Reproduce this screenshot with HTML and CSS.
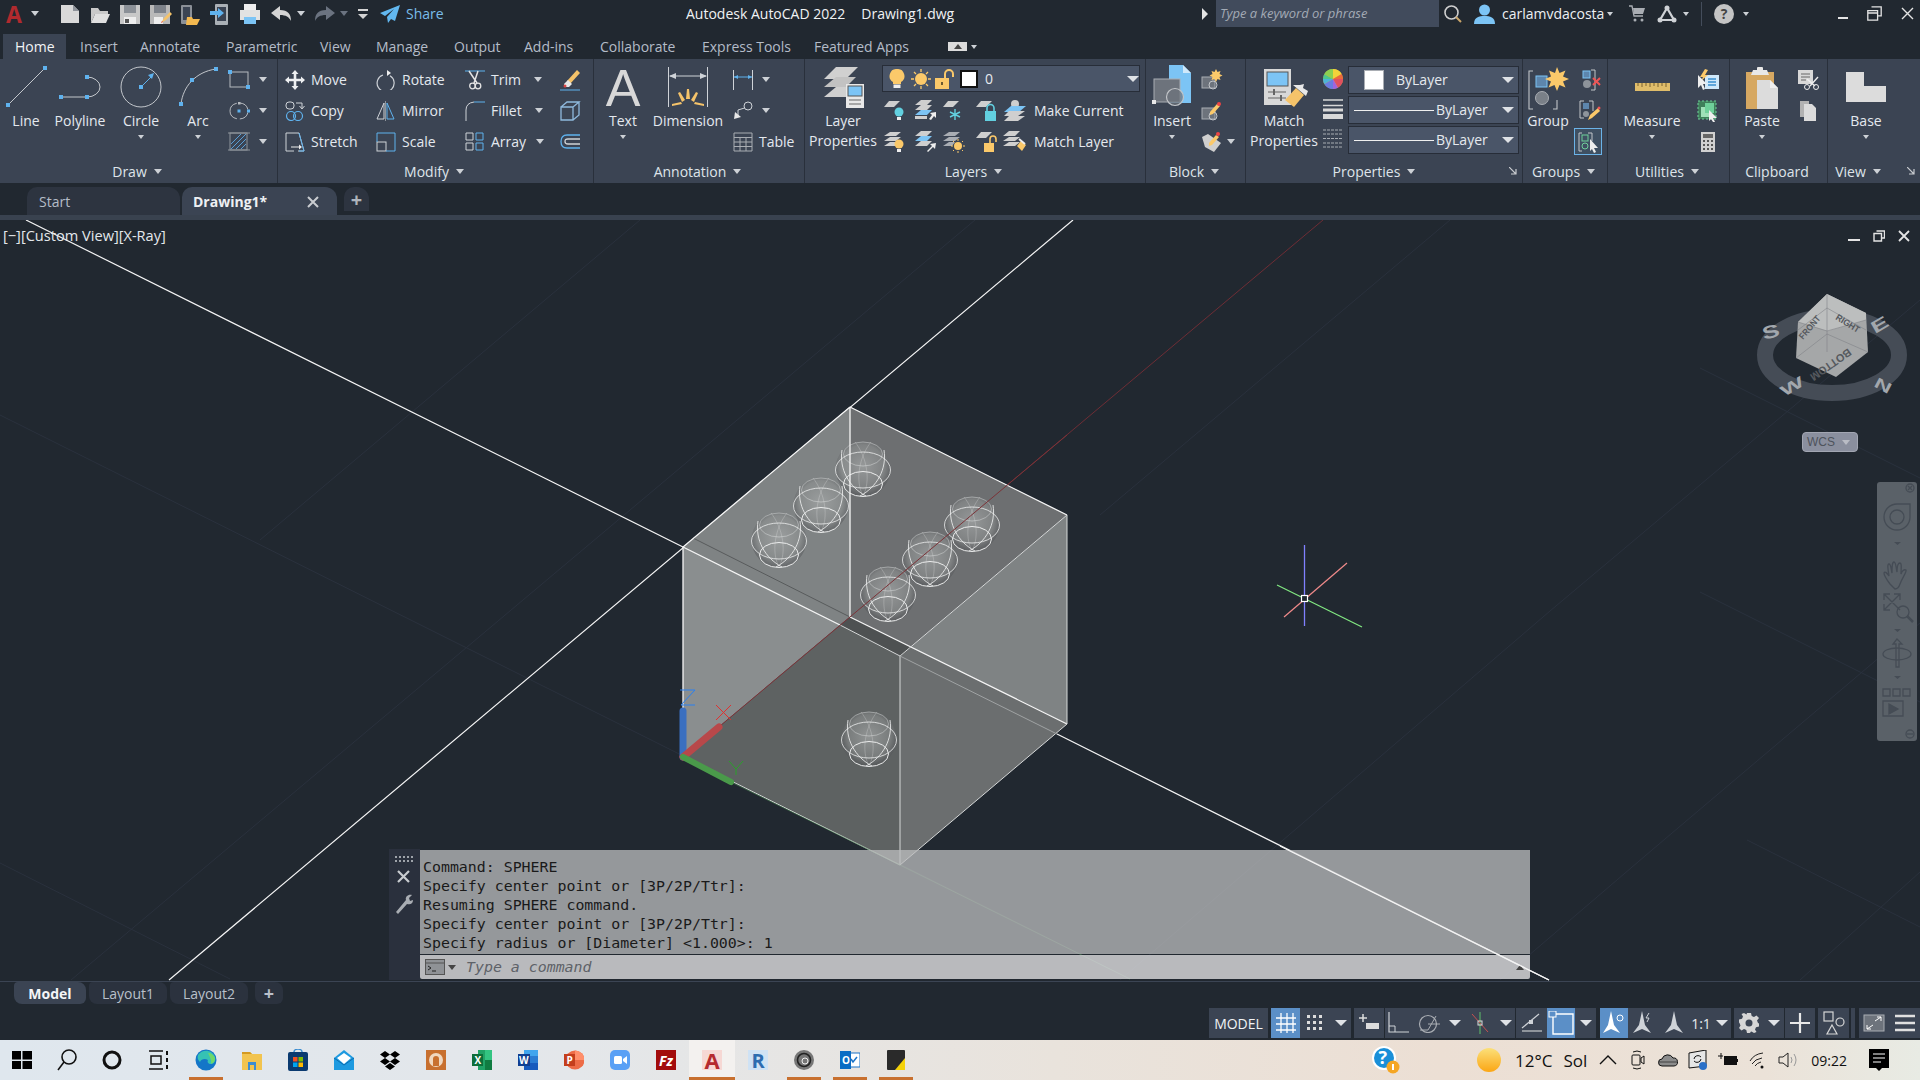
FILE: index.html
```html
<!DOCTYPE html>
<html lang="en">
<head>
<meta charset="utf-8">
<title>Autodesk AutoCAD 2022 - Drawing1.dwg</title>
<link rel="stylesheet" href="styles.css">
</head>
<body>
<div class="app">

<header class="titlebar">
  <div class="qat">
    <span class="logo">A</span><i class="caret ml9"></i>
    <svg class="ml16" width="30" height="24" viewBox="0 0 30 24"><path d="M6 3h12l6 6v12H6z" fill="#d9d9d9"/><path d="M18 3l6 6h-6z" fill="#8f949b"/></svg>
    <svg width="30" height="24" viewBox="0 0 30 24"><path d="M6 6h7l2 3h8v3H10l-4 9z" fill="#c9c9c9"/><path d="M10 12h15l-4 9H6z" fill="#e0e0e0"/></svg>
    <svg width="30" height="24" viewBox="0 0 30 24"><path d="M5 3h20v19H5z" fill="#c8c8c8"/><path d="M9 3h12v8H9z" fill="#8b9097"/><path d="M9 15h12v7H9z" fill="#eee"/><path d="M10 17h4v4h-4z" fill="#555"/></svg>
    <svg width="30" height="24" viewBox="0 0 30 24"><path d="M5 3h20v19H5z" fill="#b9b9b9"/><path d="M9 3h12v8H9z" fill="#7d828a"/><path d="M9 15h9v7H9z" fill="#eee"/><path d="M16 21l3-5 6-6 2 2-6 6z" fill="#f5c36a"/><path d="M16 21l2-1-1-1z" fill="#d44"/></svg>
    <svg width="30" height="24" viewBox="0 0 30 24"><rect x="6" y="3" width="11" height="19" rx="1" fill="#8b9097"/><rect x="8" y="5" width="7" height="13" fill="#3b4453"/><path d="M12 15h5l1 2h7l-3 6H11z" fill="#f3b84f"/></svg>
    <svg width="30" height="24" viewBox="0 0 30 24"><rect x="10" y="2" width="13" height="21" rx="1" fill="#aab0b6"/><rect x="12" y="5" width="9" height="14" fill="#3b4453"/><path d="M5 9h8V6l6 5-6 5v-3H5z" fill="#5fb2ee"/></svg>
    <svg width="30" height="24" viewBox="0 0 30 24"><path d="M9 2h12v6H9z" fill="#eee"/><path d="M5 8h20v10H5z" fill="#e2e2e2"/><path d="M9 15h12v7H9z" fill="#7cc4f5"/></svg>
    <svg width="32" height="24" viewBox="0 0 32 24"><path d="M6 11l9-7v4c8 0 11 4 11 11-2-4-5-6-11-6v5z" fill="#d4d4d4"/></svg><i class="caret"></i>
    <svg class="ml5" width="30" height="24" viewBox="0 0 30 24"><path d="M25 11l-9-7v4C8 8 5 12 5 19c2-4 5-6 11-6v5z" fill="#6b7380"/></svg><i class="caret dim"></i>
    <svg class="ml10" width="10" height="12" viewBox="0 0 10 12"><path d="M0 1h10v2H0z" fill="#d4d4d4"/><path d="M0 6h10L5 11z" fill="#d4d4d4"/></svg>
    <svg class="ml12" width="20" height="20" viewBox="0 0 20 20"><path d="M20 1L0 9l5 3 9-7-7 8 1 6 3-4 4 2z" fill="#62b8f0"/></svg>
    <span class="share">Share</span>
  </div>
  <div class="doctitle"><span>Autodesk AutoCAD 2022</span><span class="docname">Drawing1.dwg</span></div>
  <div class="infocenter">
    <svg width="8" height="12" viewBox="0 0 8 12"><path d="M1 0l6 6-6 6z" fill="#e4e4e4"/></svg>
    <div class="search ml7">Type a keyword or phrase</div>
    <svg class="ml5" width="18" height="18" viewBox="0 0 18 18"><circle cx="7.5" cy="7.5" r="6.5" fill="none" stroke="#cfcfcf" stroke-width="1.6"/><path d="M12 12l5 5" stroke="#c9a46a" stroke-width="2"/></svg>
    <svg class="ml12" width="21" height="20" viewBox="0 0 21 20"><circle cx="10.5" cy="6" r="5.5" fill="#7cc4f5"/><path d="M0 20c0-7 5-8 10.500-8s10.500 1 10.500 8z" fill="#7cc4f5"/></svg>
    <span class="user ml7">carlamvdacosta</span><i class="caret ml2 tiny"></i>
    <svg class="ml16" width="16" height="17" viewBox="0 0 16 17"><path d="M0 1h3l2 10h9" fill="none" stroke="#a9adb3" stroke-width="1.300"/><path d="M4 3h12l-2 6H5z" fill="#a9adb3"/><circle cx="6" cy="15" r="1.500" fill="#a9adb3"/><circle cx="13" cy="15" r="1.500" fill="#a9adb3"/></svg>
    <svg class="ml12" width="20" height="18" viewBox="0 0 20 18"><path d="M10 3L3 15h14z" fill="none" stroke="#cfd2d6" stroke-width="2.200"/><circle cx="10" cy="3" r="2.500" fill="#cfd2d6"/><circle cx="3" cy="15" r="2.500" fill="#cfd2d6"/><circle cx="17" cy="15" r="2.500" fill="#cfd2d6"/></svg>
    <i class="caret ml6 tiny"></i>
    <span class="vsep ml12"></span>
    <span class="help ml12">?</span><i class="caret ml9 tiny"></i>
    <div class="winbtns">
      <svg width="10" height="10" viewBox="0 0 10 10"><path d="M0 8h10v2H0z" fill="#e4e4e4"/></svg>
      <svg width="15" height="15" viewBox="0 0 15 15"><path d="M4.500.8h9.700v9h-3.600M.8 4.600h9.800v9.600H.8zM.8 7h9.800" fill="none" stroke="#e4e4e4" stroke-width="1.300"/></svg>
      <svg width="13" height="13" viewBox="0 0 13 13"><path d="M1 1l11 11M12 1L1 12" stroke="#e4e4e4" stroke-width="1.400"/></svg>
    </div>
  </div>
</header>

<nav class="ribbontabs">
  <span class="rt active">Home</span><span class="rt">Insert</span><span class="rt">Annotate</span><span class="rt">Parametric</span><span class="rt">View</span><span class="rt">Manage</span><span class="rt">Output</span><span class="rt">Add-ins</span><span class="rt">Collaborate</span><span class="rt">Express Tools</span><span class="rt">Featured Apps</span>
  <span class="minbtn"><i class="caret up"></i></span><i class="caret tiny ml4"></i>
</nav>

<section class="ribbon">
  <!-- DRAW -->
  <div class="panel p-draw">
    <div class="pbody">
      <div class="big"><svg width="42" height="46" viewBox="0 0 42 46"><path d="M3 40L40 3" stroke="#c3c7cc"/><rect x="1" y="38" width="4" height="4" fill="#5fb2ee"/><rect x="38" y="1" width="4" height="4" fill="#5fb2ee"/></svg><span class="lbl">Line</span></div>
      <div class="big"><svg width="46" height="46" viewBox="0 0 46 46"><path d="M4 32h26a13 10 0 0 0 0-20" fill="none" stroke="#c3c7cc"/><rect x="2" y="30" width="4" height="4" fill="#5fb2ee"/><rect x="28" y="30" width="4" height="4" fill="#5fb2ee"/><rect x="28" y="10" width="4" height="4" fill="#5fb2ee"/></svg><span class="lbl">Polyline</span></div>
      <div class="big"><svg width="46" height="46" viewBox="0 0 46 46"><circle cx="23" cy="22" r="20" fill="none" stroke="#c3c7cc"/><path d="M23 22l10-10" stroke="#5fb2ee"/><path d="M36 8l-6 2 4 4z" fill="#5fb2ee"/><rect x="21" y="20" width="4" height="4" fill="#5fb2ee"/></svg><span class="lbl">Circle</span><i class="caret sm"></i></div>
      <div class="big"><svg width="46" height="46" viewBox="0 0 46 46"><path d="M6 39C8 22 20 7 41 4" fill="none" stroke="#c3c7cc"/><rect x="4" y="37" width="4" height="4" fill="#5fb2ee"/><rect x="39" y="2" width="4" height="4" fill="#5fb2ee"/><rect x="15" y="13" width="4" height="4" fill="#5fb2ee"/></svg><span class="lbl">Arc</span><i class="caret sm"></i></div>
      <div class="rows drawsmall">
        <div class="row"><svg width="22" height="22" viewBox="0 0 22 22"><rect x="2" y="3" width="18" height="15" fill="none" stroke="#b6babf"/><rect x="0" y="1" width="4" height="4" fill="#5fb2ee"/><rect x="18" y="16" width="4" height="4" fill="#5fb2ee"/></svg><i class="caret ml9"></i></div>
        <div class="row"><svg width="22" height="22" viewBox="0 0 22 22"><path d="M2 11a9 8 0 0 1 18 0a9 8 0 0 1-18 0" fill="none" stroke="#b6babf" stroke-dasharray="11 3"/><rect x="9.500" y="9.500" width="3" height="3" fill="#5fb2ee"/><rect x="10" y="2" width="2.500" height="2.500" fill="#b6babf"/><rect x="19" y="9.500" width="3" height="3" fill="#5fb2ee"/></svg><i class="caret ml9"></i></div>
        <div class="row"><svg width="22" height="22" viewBox="0 0 22 22"><rect x="2" y="2" width="17" height="17" fill="none" stroke="#8e949b"/><path d="M3 13L13 3M3 18L18 3M8 18L18 8M13 18l5-5" stroke="#5a9dd4"/><path d="M0 2h22M0 19h22" stroke="#8e949b"/></svg><i class="caret ml9"></i></div>
      </div>
    </div>
    <div class="ptitle">Draw <i class="caret"></i></div>
  </div>
  <!-- MODIFY -->
  <div class="panel p-modify">
    <div class="pbody">
      <div class="rows col1">
        <div class="row t"><svg width="20" height="20" viewBox="0 0 20 20"><path d="M10 0l3.500 4H11.300v4.700H16V6.500l4 3.500-4 3.500v-2.300h-4.700V16h2.200L10 20l-3.500-4h2.200v-4.800H4v2.300L0 10l4-3.500v2.200h4.700V4H6.500z" fill="#eef0f2"/></svg><span>Move</span></div>
        <div class="row t"><svg width="20" height="20" viewBox="0 0 20 20"><rect x="1" y="1" width="8" height="7" rx="3" fill="none" stroke="#cfd3d8"/><circle cx="6" cy="15" r="4.500" fill="none" stroke="#5fb2ee" stroke-width="1.200"/><circle cx="13" cy="15" r="4.500" fill="none" stroke="#5fb2ee" stroke-width="1.200"/><path d="M11 2h6v5M14.500 5l2.500 3 2.500-3" fill="none" stroke="#cfd3d8"/></svg><span>Copy</span></div>
        <div class="row t"><svg width="20" height="20" viewBox="0 0 20 20"><path d="M9 19H1V1h13l5 18h-6" fill="none" stroke="#cfd3d8"/><path d="M6 15h8" stroke="#eee"/><path d="M14 12.500l3 2.500-3 2.500z" fill="#eee"/><path d="M14 1l5 18h-5" fill="none" stroke="#5fb2ee"/></svg><span>Stretch</span></div>
      </div>
      <div class="rows col2">
        <div class="row t"><svg width="20" height="20" viewBox="0 0 20 20"><path d="M6 4a8.500 8.500 0 1 0 7 .8" fill="none" stroke="#cfd3d8" stroke-width="1.200" transform="translate(1 1)"/><path d="M11 0l4 3-4 3z" fill="#eee"/></svg><span>Rotate</span></div>
        <div class="row t"><svg width="20" height="20" viewBox="0 0 20 20"><path d="M8 2L1 18h7z" fill="none" stroke="#cfd3d8"/><path d="M11 2l7 16h-7z" fill="none" stroke="#5fb2ee"/><path d="M9.500 0v20" stroke="#8e949b"/></svg><span>Mirror</span></div>
        <div class="row t"><svg width="20" height="20" viewBox="0 0 20 20"><rect x="1" y="10" width="9" height="9" fill="none" stroke="#cfd3d8"/><path d="M1 10V1h18v18h-9" fill="none" stroke="#5fb2ee"/></svg><span>Scale</span></div>
      </div>
      <div class="rows col3">
        <div class="row t"><svg width="20" height="20" viewBox="0 0 20 20"><path d="M0 1h20" stroke="#5fb2ee"/><path d="M4 1l8 12M13 1L9 13" stroke="#e4e4e4" stroke-width="1.500"/><circle cx="7.500" cy="16" r="2.800" fill="none" stroke="#e4e4e4" stroke-width="1.300"/><circle cx="13" cy="16" r="2.800" fill="none" stroke="#e4e4e4" stroke-width="1.300"/></svg><span>Trim</span><i class="caret ml13"></i></div>
        <div class="row t"><svg width="20" height="20" viewBox="0 0 20 20"><path d="M1 20V9q0-7 8-8" fill="none" stroke="#cfd3d8"/><path d="M9 1h11" stroke="#5fb2ee"/></svg><span>Fillet</span><i class="caret ml13"></i></div>
        <div class="row t"><svg width="20" height="20" viewBox="0 0 20 20"><path d="M1 1h7v7H1zM1 11h7v7H1z" fill="none" stroke="#cfd3d8"/><path d="M11 1h7v7h-7zM11 11h7v7h-7z" fill="none" stroke="#5fb2ee"/></svg><span>Array</span><i class="caret ml10"></i></div>
      </div>
      <div class="rows col4">
        <div class="row"><svg width="22" height="22" viewBox="0 0 22 22"><path d="M8 12l10-11 3 3-10 11z" fill="#f5c36a"/><path d="M5 15l4-4 4 4-3 3H6z" fill="#e8e8e8"/><circle cx="6" cy="17" r="1.500" fill="#d44"/><path d="M1 21h20" stroke="#5fb2ee"/></svg></div>
        <div class="row"><svg width="22" height="22" viewBox="0 0 22 22"><path d="M2 7h12v13H2zM2 7l6-5h12l-6 5M14 20l6-5V2" fill="none" stroke="#8fb9dd" stroke-width="1.300"/></svg></div>
        <div class="row"><svg width="22" height="22" viewBox="0 0 22 22"><path d="M21 4H8q-6 0-6 6.500T8 17h13" fill="none" stroke="#5fb2ee" stroke-width="1.300"/><path d="M21 8H9q-3 0-3 2.500T9 13h12" fill="none" stroke="#cfd3d8" stroke-width="1.300"/></svg></div>
      </div>
    </div>
    <div class="ptitle">Modify <i class="caret"></i></div>
  </div>
  <!-- ANNOTATION -->
  <div class="panel p-annot">
    <div class="pbody">
      <div class="big"><span class="bigA">A</span><span class="lbl">Text</span><i class="caret sm"></i></div>
      <div class="big"><svg width="42" height="46" viewBox="0 0 42 46"><path d="M1.500 2v40M40.500 2v40" stroke="#cfd3d8"/><path d="M3 11h36" stroke="#cfd3d8"/><path d="M2 11l7-3v6zM40 11l-7-3v6z" fill="#cfd3d8"/><g fill="#f5c36a"><path d="M20 24h2l1 10h-4z"/><path d="M11 28l2-1 5 8-3 2z"/><path d="M31 28l-2-1-5 8 3 2z"/><path d="M5 39l9-2 1 2-10 2z"/><path d="M37 39l-9-2-1 2 10 2z"/></g></svg><span class="lbl">Dimension</span></div>
      <div class="rows annsmall">
        <div class="row"><svg width="20" height="20" viewBox="0 0 20 20"><path d="M.5 0v20M19.500 0v20" stroke="#cfd3d8"/><path d="M1 7h18" stroke="#5fb2ee"/><path d="M1 7l4-2v4zM19 7l-4-2v4z" fill="#5fb2ee"/></svg><i class="caret ml9"></i></div>
        <div class="row"><svg width="20" height="20" viewBox="0 0 20 20"><circle cx="15" cy="5" r="4" fill="none" stroke="#cfd3d8"/><path d="M11.500 7L5 9v6" fill="none" stroke="#cfd3d8"/><path d="M1 18l1-7 6 5z" fill="#e8e8e8"/></svg><i class="caret ml9"></i></div>
        <div class="row t"><svg width="20" height="20" viewBox="0 0 20 20"><path d="M1 1h18v18H1zM1 5.500h18M1 10h18M1 14.500h18M7 5.500V19M13 5.500V19" fill="none" stroke="#a9adb3"/></svg><span>Table</span></div>
      </div>
    </div>
    <div class="ptitle">Annotation <i class="caret"></i></div>
  </div>
  <!-- LAYERS -->
  <div class="panel p-layers">
    <div class="pbody">
      <div class="big"><svg width="42" height="46" viewBox="0 0 42 46"><g fill="#d0d0d0"><path d="M14 2h22L24 14H2z"/><path d="M14 12h20L24 22H2z" fill="#c2c2c2"/><path d="M14 22h20L24 32H2z" fill="#d0d0d0"/></g><rect x="24" y="19" width="18" height="24" fill="#e8e8e8"/><rect x="26" y="21" width="14" height="10" fill="#7cc4f5" stroke="#555"/><path d="M27 35h12M27 39h12" stroke="#666"/></svg><span class="lbl">Layer</span><span class="lbl">Properties</span></div>
      <div class="layerscol">
        <div class="dd layerdd">
          <svg width="16" height="20" viewBox="0 0 16 20"><path d="M8 0a7 7 0 0 1 4 13v2H4v-2A7 7 0 0 1 8 0z" fill="#fbc96a"/><path d="M4.500 15.500h7V19h-7z" fill="#eee"/></svg>
          <svg class="ml6" width="20" height="20" viewBox="0 0 20 20"><circle cx="10" cy="10" r="6" fill="#fbc96a"/><path d="M10 0v3M10 17v3M0 10h3M17 10h3M3 3l2 2M15 15l2 2M3 17l2-2M15 5l2-2" stroke="#fbc96a" stroke-width="1.300"/></svg>
          <svg class="ml4" width="20" height="20" viewBox="0 0 20 20"><rect x="0" y="9" width="14" height="11" fill="#fbc96a"/><path d="M10 9V5a4 4 0 0 1 8 0v3" fill="none" stroke="#fbc96a" stroke-width="2"/><rect x="6" y="13" width="2" height="3" fill="#6d5a30"/></svg>
          <span class="swatch ml5"></span><span class="ddtext ml7">0</span><i class="caret lg right"></i>
        </div>
        <div class="row layerrow t">
          <svg width="22" height="22" viewBox="0 0 22 22"><path d="M5 1h11l-6 6H0z" fill="#cfcfcf"/><circle cx="15" cy="12" r="4.500" fill="#62d0e0"/><path d="M13 17h4v3h-4z" fill="#eee"/></svg>
          <svg width="22" height="22" viewBox="0 0 22 22"><path d="M6 0h11l-5 5H0z" fill="#cfcfcf"/><path d="M6 5h11l-5 5H0z" fill="#cfcfcf"/><path d="M6 10h11l-5 5H0z" fill="#7cc4f5"/><path d="M0 16h12v3H0z" fill="#cfcfcf"/><path d="M21 12l-6 1 2 2-3 4 2 1 3-4 2 2z" fill="#eee"/></svg>
          <svg width="22" height="22" viewBox="0 0 22 22"><path d="M5 1h11l-6 6H0z" fill="#cfcfcf"/><path d="M12 9v11M7 12l10 5M17 12L7 17" stroke="#62d0e0" stroke-width="1.400"/></svg>
          <svg width="22" height="22" viewBox="0 0 22 22"><path d="M5 1h11l-6 6H0z" fill="#cfcfcf"/><rect x="9" y="11" width="11" height="10" fill="#62d0e0"/><path d="M11 11V8a3.500 3.500 0 0 1 7 0v3" fill="none" stroke="#62d0e0" stroke-width="1.600"/></svg>
          <svg width="24" height="22" viewBox="0 0 24 22"><circle cx="12" cy="4" r="4" fill="#cfcfcf"/><path d="M8 6h15l-7 6H1z" fill="#7cc4f5"/><path d="M6 11h16l-7 5H1z" fill="#cfcfcf"/><path d="M6 16h16l-7 5H1z" fill="#cfcfcf"/></svg>
          <span>Make Current</span>
        </div>
        <div class="row layerrow t">
          <svg width="22" height="22" viewBox="0 0 22 22"><path d="M6 1h11l-5 4H0z M6 6h11l-5 4H0z M6 11h9l-3 4H0z" fill="#cfcfcf"/><circle cx="15" cy="13" r="4.500" fill="#fbc96a"/><path d="M13 18h4v3h-4z" fill="#eee"/></svg>
          <svg width="22" height="22" viewBox="0 0 22 22"><path d="M6 0h11l-5 5H0z" fill="#cfcfcf"/><path d="M6 5h11l-5 5H0z" fill="#7cc4f5"/><path d="M6 10h11l-5 5H0z" fill="#cfcfcf"/><path d="M21 12l-6 1 2 2-5 5 1 1 5-5 2 2z" fill="#eee"/></svg>
          <svg width="22" height="22" viewBox="0 0 22 22"><path d="M6 1h11l-5 4H0z M6 6h11l-5 4H0z M6 11h6l-3 4H0z" fill="#a9adb3"/><circle cx="15" cy="15" r="4" fill="#fbc96a"/><path d="M15 8v2M15 20v2M8 15h2M20 15h2M10 10l1 1M19 19l1 1M10 20l1-1M19 11l1-1" stroke="#fbc96a"/></svg>
          <svg width="22" height="22" viewBox="0 0 22 22"><path d="M5 1h11l-6 6H0z" fill="#cfcfcf"/><rect x="8" y="12" width="10" height="9" fill="#fbc96a"/><path d="M14 12V8a3 3 0 0 1 6 0v3" fill="none" stroke="#fbc96a" stroke-width="1.600"/></svg>
          <svg width="24" height="22" viewBox="0 0 24 22"><path d="M6 0h11l-5 5H0z M6 6h11l-5 4H0z M6 11h11l-5 4H0z" fill="#cfcfcf"/><path d="M14 15l4-5 5 4-4 6z" fill="#fbc96a"/><path d="M16 8l6 5" stroke="#eee" stroke-width="2"/></svg>
          <span>Match Layer</span>
        </div>
      </div>
    </div>
    <div class="ptitle">Layers <i class="caret"></i></div>
  </div>
  <!-- BLOCK -->
  <div class="panel p-block">
    <div class="pbody">
      <div class="big"><svg width="42" height="46" viewBox="0 0 42 46"><path d="M18 0h14l8 8v30H18z" fill="#7cc4f5"/><path d="M32 0l8 8h-8z" fill="#cfe8fa"/><rect x="3" y="14" width="26" height="23" fill="#6d737c" stroke="#a9adb3"/><circle cx="24" cy="32" r="8.500" fill="#6d737c" fill-opacity=".7" stroke="#c2c5c9" stroke-width="1.200"/><rect x="1" y="35" width="4" height="4" fill="#e8e8e8"/></svg><span class="lbl">Insert</span><i class="caret sm"></i></div>
      <div class="rows blocksmall">
        <div class="row"><svg width="22" height="22" viewBox="0 0 22 22"><rect x="1" y="8" width="13" height="11" fill="#6d737c" stroke="#a9adb3"/><circle cx="12" cy="16" r="4" fill="none" stroke="#c2c5c9"/><path d="M15 0l1.500 3 3-1-1 3 3 1.500-3 1.500 1 3-3-1L15 13l-1.500-3-3 1 1-3L8.500 6.500l3-1.500-1-3 3 1z" fill="#fbc96a"/></svg></div>
        <div class="row"><svg width="22" height="22" viewBox="0 0 22 22"><rect x="1" y="8" width="13" height="11" fill="#6d737c" stroke="#a9adb3"/><circle cx="12" cy="16" r="4" fill="none" stroke="#c2c5c9"/><path d="M9 12l7-8 3 2-7 8-3 1z" fill="#fbc96a"/><circle cx="18" cy="4" r="2" fill="#e44"/></svg></div>
        <div class="row"><svg width="22" height="22" viewBox="0 0 22 22"><path d="M1 6l6-3 13 9-7 9-9-5z" fill="#cfcfcf"/><path d="M8 12l7-8 3 2-7 8-3 1z" fill="#fbc96a"/><circle cx="17" cy="3" r="2" fill="#e44"/></svg><i class="caret ml4"></i></div>
      </div>
    </div>
    <div class="ptitle">Block <i class="caret"></i></div>
  </div>
  <!-- PROPERTIES -->
  <div class="panel p-props">
    <div class="pbody">
      <div class="big"><svg width="50" height="46" viewBox="0 0 50 46"><rect x="5" y="4" width="27" height="36" fill="#d8d8d8"/><rect x="8" y="7" width="21" height="14" fill="#7cc4f5" stroke="#555"/><path d="M9 27h18M9 33h18" stroke="#666"/><rect x="14" y="24" width="2" height="6" fill="#666"/><rect x="21" y="30" width="2" height="6" fill="#666"/><path d="M26 35l11-12 8 7-10 12z" fill="#f5c36a"/><path d="M34 20l13 11 2-5-5-3 1-4-4 1z" fill="#e8e8e8"/></svg><span class="lbl">Match</span><span class="lbl">Properties</span></div>
      <div class="rows propicons">
        <div class="row"><svg width="20" height="20" viewBox="0 0 20 20"><circle cx="10" cy="10" r="10" fill="#e8a33a"/><path d="M10 10V0a10 10 0 0 1 8.700 5z" fill="#f2d23a"/><path d="M10 10l8.700-5A10 10 0 0 1 20 10z" fill="#ea6a3c"/><path d="M10 10h10a10 10 0 0 1-5 8.700z" fill="#e0505f"/><path d="M10 10l5 8.700A10 10 0 0 1 10 20z" fill="#a064dc"/><path d="M10 10v10a10 10 0 0 1-8.700-5z" fill="#6a7ce0"/><path d="M10 10l-8.700 5A10 10 0 0 1 0 10z" fill="#4cb4d8"/><path d="M10 10H0a10 10 0 0 1 1.300-5z" fill="#4cc88c"/><path d="M10 10L1.300 5A10 10 0 0 1 10 0z" fill="#8cd050"/></svg></div>
        <div class="row"><svg width="20" height="20" viewBox="0 0 20 20"><path d="M0 1h20M0 6.500h20" stroke="#d8d8d8" stroke-width="1.500"/><path d="M0 9.500h20v3H0z" fill="#d8d8d8"/><path d="M0 15h20v5H0z" fill="#d8d8d8"/></svg></div>
        <div class="row"><svg width="20" height="20" viewBox="0 0 20 20"><path d="M0 1h20M0 5h20M0 9.500h20M0 14h20M0 18h20" stroke="#a9adb3" stroke-dasharray="3 1"/></svg></div>
      </div>
      <div class="propdds">
        <div class="dd"><span class="swatch2"></span><span class="ddtext ml12">ByLayer</span><i class="caret lg right"></i></div>
        <div class="dd"><span class="ddline"></span><span class="ddtext">ByLayer</span><i class="caret lg right"></i></div>
        <div class="dd"><span class="ddline"></span><span class="ddtext">ByLayer</span><i class="caret lg right"></i></div>
      </div>
    </div>
    <div class="ptitle propstitle">Properties <i class="caret"></i><svg class="launch" width="8" height="8" viewBox="0 0 8 8"><path d="M0 0l7 7M7 2v5H2" fill="none" stroke="#c9ccd0" stroke-width="1.200"/></svg></div>
  </div>
  <!-- GROUPS -->
  <div class="panel p-groups">
    <div class="pbody">
      <div class="big"><svg width="42" height="46" viewBox="0 0 42 46"><path d="M6 6H2v38h4M26 44h4v-9" fill="none" stroke="#c2c5c9" stroke-width="1.100"/><rect x="9" y="11" width="11" height="11" fill="#5d86ad" stroke="#7cc4f5"/><circle cx="15" cy="33" r="6.500" fill="#7a8088" stroke="#a9adb3"/><path d="M30 2l2.500 6 6-2.500-2.500 6 6 2.500-6 2.500 2.500 6-6-2.500L30 26l-2.500-6-6 2.500 2.500-6-6-2.500 6-2.500L22 5.500l6 2.500z" fill="#fbc96a"/></svg><span class="lbl">Group</span></div>
      <div class="rows groupsmall">
        <div class="row"><svg width="22" height="22" viewBox="0 0 22 22"><path d="M12 1h4v20h-4" fill="none" stroke="#c2c5c9"/><rect x="4" y="2" width="7" height="7" fill="#5d86ad" stroke="#7cc4f5"/><circle cx="8" cy="15" r="4" fill="#8e949b"/><path d="M14 9l7 7M21 9l-7 7" stroke="#e55" stroke-width="2"/></svg></div>
        <div class="row"><svg width="22" height="22" viewBox="0 0 22 22"><path d="M5 1H1v17h4M10 1h4v10" fill="none" stroke="#c2c5c9"/><rect x="4" y="3" width="6" height="6" fill="#5d86ad"/><circle cx="7" cy="14" r="3" fill="#8e949b"/><path d="M9 20l2-5 8-7 2 3-8 7z" fill="#fbc96a"/><circle cx="20" cy="8" r="1.500" fill="#e55"/></svg></div>
        <div class="row selbox"><svg width="24" height="22" viewBox="0 0 24 22"><path d="M6 2H3v18h3M12 2h4v8" fill="none" stroke="#c2c5c9"/><rect x="6" y="4" width="6" height="6" fill="none" stroke="#6fd09a"/><circle cx="9" cy="15" r="3" fill="none" stroke="#6fd09a"/><path d="M14 8l8 9-4 0 2 4-2 1-2-4-2 2z" fill="#eee"/></svg></div>
      </div>
    </div>
    <div class="ptitle">Groups <i class="caret"></i></div>
  </div>
  <!-- UTILITIES -->
  <div class="panel p-util">
    <div class="pbody">
      <div class="big"><svg width="36" height="46" viewBox="0 0 36 46"><rect x="1" y="18" width="35" height="8" fill="#e0bd6a"/><path d="M4 18v3M8 18v4M12 18v3M16 18v4M20 18v3M24 18v4M28 18v3M32 18v4" stroke="#7a6230"/></svg><span class="lbl">Measure</span><i class="caret sm"></i></div>
      <div class="rows utilsmall">
        <div class="row"><svg width="22" height="22" viewBox="0 0 22 22"><rect x="8" y="6" width="14" height="14" fill="#cfe8fa"/><path d="M11 10h8M11 13h8M11 16h8" stroke="#3a8fcf" stroke-width="1.300"/><path d="M8 0L3 8h3L4 12l7-6H8l3-5z" fill="#fbc96a"/><path d="M1 6l9 9-4 0 2 5-2 1-2-5-3 3z" fill="#eee"/></svg></div>
        <div class="row"><svg width="22" height="22" viewBox="0 0 22 22"><rect x="1" y="1" width="18" height="18" fill="#3f7f5a" stroke="#6fd09a" stroke-dasharray="2 2"/><rect x="4" y="7" width="10" height="10" fill="#9fe0b8"/><rect x="8" y="3" width="9" height="10" fill="#6fd09a"/><path d="M12 10l8 8-4 0 2 4-2 0-2-3-2 2z" fill="#eee"/></svg></div>
        <div class="row"><svg width="22" height="22" viewBox="0 0 22 22"><rect x="4" y="1" width="14" height="20" fill="#d0d0d0"/><rect x="6" y="3" width="10" height="4" fill="#666"/><path d="M6 9h2v2H6zM10 9h2v2h-2zM14 9h2v2h-2zM6 13h2v2H6zM10 13h2v2h-2zM14 13h2v2h-2zM6 17h2v2H6zM10 17h2v2h-2zM14 17h2v2h-2z" fill="#555"/></svg></div>
      </div>
    </div>
    <div class="ptitle">Utilities <i class="caret"></i></div>
  </div>
  <!-- CLIPBOARD -->
  <div class="panel p-clip">
    <div class="pbody">
      <div class="big"><svg width="36" height="46" viewBox="0 0 36 46"><rect x="2" y="7" width="28" height="37" fill="#d6a862"/><path d="M9 5h14l2 5H7z" fill="#e8e8e8"/><rect x="13" y="2" width="6" height="4" rx="1" fill="#e8e8e8"/><path d="M13 15h13l8 8v21H13z" fill="#dcdcdc"/><path d="M26 15l8 8h-8z" fill="#f0f0f0"/></svg><span class="lbl">Paste</span><i class="caret sm"></i></div>
      <div class="rows clipsmall">
        <div class="row"><svg width="22" height="22" viewBox="0 0 22 22"><path d="M1 1h15v14H1z" fill="#d8d8d8"/><path d="M4 5h9M4 8h9M4 11h5" stroke="#666"/><path d="M10 10l8 7M21 8l-8 9" stroke="#eee" stroke-width="1.400"/><circle cx="10" cy="18" r="2.500" fill="none" stroke="#eee"/><circle cx="19" cy="18" r="2.500" fill="none" stroke="#eee"/></svg></div>
        <div class="row"><svg width="22" height="22" viewBox="0 0 22 22"><path d="M3 1h9v16H3z" fill="#b2b2b2"/><path d="M7 4h8l4 4v13H7z" fill="#dcdcdc"/></svg></div>
      </div>
    </div>
    <div class="ptitle">Clipboard</div>
  </div>
  <!-- VIEW -->
  <div class="panel p-view">
    <div class="pbody">
      <div class="big"><svg width="40" height="46" viewBox="0 0 40 46"><path d="M0 7h18v14h22v16H0z" fill="#dcdcdc"/></svg><span class="lbl">Base</span><i class="caret sm"></i></div>
    </div>
    <div class="ptitle viewtitle">View <i class="caret"></i><svg class="launch" width="8" height="8" viewBox="0 0 8 8"><path d="M0 0l7 7M7 2v5H2" fill="none" stroke="#c9ccd0" stroke-width="1.200"/></svg></div>
  </div>
</section>

<div class="filetabs">
  <span class="ftab start">Start</span>
  <span class="ftab current"><b>Drawing1*</b><svg width="12" height="12" viewBox="0 0 12 12"><path d="M1 1l10 10M11 1L1 11" stroke="#c9ccd0" stroke-width="2"/></svg></span>
  <span class="ftab plus">+</span>
</div>
<div class="strip"></div>

<main class="viewport">
  <svg class="canvas" width="1920" height="761" viewBox="0 220 1920 761">
    <defs>
      <radialGradient id="blob" cx=".5" cy=".45" r=".52">
        <stop offset="0" stop-color="#a8abab" stop-opacity=".7"/>
        <stop offset=".75" stop-color="#8f9292" stop-opacity=".55"/>
        <stop offset="1" stop-color="#55575a" stop-opacity=".5"/>
      </radialGradient>
      <g id="sph">
        <circle cx="0" cy="0" r="27.500" fill="url(#blob)"/>
        <g fill="none" stroke="#eceded" stroke-width="1">
          <ellipse cx="0" cy="1" rx="27.500" ry="18" stroke-opacity=".8"/>
          <ellipse cx="0" cy="15" rx="19.500" ry="12.500"/>
          <ellipse cx="0" cy="-15" rx="19.500" ry="12" stroke-opacity=".4"/>
          <path d="M-21-19C-24 0-14 18 3 27M21-19C24 0 14 18-3 27" stroke-opacity=".85"/>
          <path d="M-8-27C4-12 8 12 0 27M8-27C-4-12-8 12 0 27" stroke-opacity=".25"/>
        </g>
      </g>
    </defs>
    <g class="grid">
      <path d="M0 415L1130 979M0 863L230 979M975 220L71 980M1700 368L1920 478M1700 592L1920 702M1920 300L1550 611L1120 980M1920 623L1652 850L1500 980M1450 220L1100 515M1747 840L1920 927M1920 872L1800 980M640 220L260 540"/>
    </g>
    <path class="red" d="M683 757L1323 220"/>
    <path class="axis" d="M26 220L683 547M1073 220L169 980M1057 734L1549 980"/>
    <polygon points="850,407 683,547 840,625 850,617" fill="#7f8384"/>
    <polygon points="850,407 1067,515 911,647 850,617" fill="#6d6f71"/>
    <polygon points="1067,515 1067,724 911,647" fill="#7f8384"/>
    <polygon points="683,547 840,625 683,757" fill="#8a8e8f"/>
    <polygon points="683,757 840,625 900,656 900,865" fill="#5e6262"/>
    <polygon points="900,656 911,647 1067,724 900,865" fill="#6b6e6f"/>
    <polygon points="850,617 911,647 900,656 840,625" fill="#4e5152"/>
    <path d="M693 538L850 617" stroke="#585b5c" stroke-width="1"/>
    <use href="#sph" x="863" y="469"/><use href="#sph" x="821" y="505"/><use href="#sph" x="779" y="540"/>
    <use href="#sph" x="972" y="524"/><use href="#sph" x="930" y="559"/><use href="#sph" x="888" y="594"/>
    <use href="#sph" x="869" y="739"/>
    <path class="edge" d="M850 407L683 547V757M850 407L1067 515M850 407V617M850 617L1067 724M683 547L840 625"/>
    <path class="edge thin" d="M1067 515V724L900 865L683 757M900 656L1067 515M840 625L900 656V865"/>
    <path class="greyline" d="M900 656L1057 734"/>
    <path class="redin" d="M683 757L1067 435"/>
    <path class="green" d="M733 783L900 865L1130 979"/>
    <g class="ucs">
      <path d="M683 757V711" stroke="#3a6fc0" stroke-width="7" stroke-linecap="round"/>
      <path d="M683 757L719 727" stroke="#b8484a" stroke-width="7" stroke-linecap="round"/>
      <path d="M683 757L731 782" stroke="#4a9a4a" stroke-width="6" stroke-linecap="round"/>
      <path d="M680 690H695L681 705H695" fill="none" stroke="#2a80f0"/>
      <path d="M716 705L731 720M731 705L716 720" stroke="#e03030"/>
      <path d="M729 761L736 769L743 761M736 769V775" fill="none" stroke="#2aa02a"/>
    </g>
    <g class="cursor">
      <path d="M1304.500 545V626" stroke="#8080ff" stroke-width="1.300"/>
      <path d="M1277 585L1362 627" stroke="#82e882" stroke-width="1.200"/>
      <path d="M1284 617L1347 563" stroke="#f08a8a" stroke-width="1.200"/>
      <rect x="1301.500" y="595.500" width="6" height="6" fill="#212830" stroke="#fff" stroke-width="1.200"/>
    </g>
  </svg>

  <span class="vplabel">[−][Custom View][X-Ray]</span>
  <div class="vpbtns">
    <svg width="12" height="12" viewBox="0 0 12 12"><path d="M0 9h12v2H0z" fill="#e4e4e4"/></svg>
    <svg width="12" height="12" viewBox="0 0 12 12"><path d="M3.500 1h8v7h-3M1 3.500h7.500v7.500H1z" fill="none" stroke="#e4e4e4" stroke-width="1.400"/></svg>
    <svg width="12" height="12" viewBox="0 0 12 12"><path d="M1 1l10 10M11 1L1 11" stroke="#e4e4e4" stroke-width="1.800"/></svg>
  </div>

  <svg class="viewcube" width="170" height="130" viewBox="1750 280 170 130">
    <ellipse cx="1832" cy="355" rx="67" ry="38" fill="none" stroke="#454c56" stroke-width="16"/>
    <polygon points="1827,294 1866,313 1868,352 1836,377 1796,358 1798,322" fill="#a5a7a8"/>
    <polygon points="1827,294 1866,313 1866,320 1828,331 1798,322" fill="#bcbebe"/>
    <path d="M1827 294V352M1798 322L1827 331L1866 320M1796 358L1827 334L1868 352M1798 330L1827 308L1866 330" fill="none" stroke="#7d8084" stroke-width=".7" opacity=".8"/>
    <text class="cubetxt" transform="translate(1803,340) rotate(-50) scale(.9,1)">FRONT</text>
    <text class="cubetxt" transform="translate(1835,319) rotate(32) scale(.95,1)">RIGHT</text>
    <text class="cubetxt big" transform="translate(1848,348) rotate(145)">BOTTOM</text>
    <text class="compass" transform="translate(1764,340) rotate(-15) scale(1.300,.9)">S</text>
    <text class="compass" transform="translate(1875,334) rotate(-30) scale(1.300,.85)">E</text>
    <text class="compass" transform="translate(1784,397) rotate(-30) scale(1.300,.75)">W</text>
    <text class="compass" transform="translate(1873,386) rotate(28) scale(1.200,.75)">N</text>
  </svg>
  <div class="wcs">WCS<i class="caret hollow"></i></div>

  <div class="navbar">
    <svg width="40" height="259" viewBox="0 0 40 259">
      <g fill="none" stroke="#454c55" stroke-width="1.300">
        <circle cx="33" cy="6" r="4"/><path d="M31 4l4 4M35 4l-4 4"/>
        <path d="M20 22a13 13 0 1 0 13 13V22z"/><circle cx="20" cy="35" r="7"/>
        <path d="M13 102c-3-4-6-9-6-11 1-2 3 0 5 3-1-7-2-12 0-12 2 0 2 5 3 9 0-6 0-11 2-11s2 6 3 10c0-5 1-9 3-9 2 0 1 6 1 11 1-3 3-5 5-4 1 2-4 8-6 14-1 3-2 5-5 5z"/>
        <path d="M7 112l16 16M23 112L7 128M7 118v-6h6M23 118v-6h-6M7 122v6h6"/><circle cx="26" cy="130" r="6"/><path d="M30 134l6 6" stroke-width="2.500"/>
        <path d="M20 157l-4 5h3v23h3v-23h3z"/><ellipse cx="20" cy="172" rx="14" ry="6"/>
        <path d="M6 207h7v7H6zM16 207h7v7h-7zM26 207h7v7h-7zM6 219h20v15H6z"/><path d="M12 222l9 5-9 5z" fill="#454c55"/>
        <circle cx="33" cy="252" r="4"/><path d="M30 252h6"/>
      </g>
      <path d="M17 60h7l-3.500 3zM17 147h7l-3.500 3zM17 194h7l-3.500 3z" fill="#454c55"/>
    </svg>
  </div>

  <section class="cmd">
    <div class="cmdhandle">
      <svg width="18" height="6" viewBox="0 0 18 6"><path d="M0 0h2v2H0zM4 0h2v2H4zM8 0h2v2H8zM12 0h2v2h-2zM16 0h2v2h-2zM0 4h2v2H0zM4 4h2v2H4zM8 4h2v2H8zM12 4h2v2h-2zM16 4h2v2h-2z" fill="#9ea3aa"/></svg>
      <svg width="13" height="13" viewBox="0 0 13 13"><path d="M1 1l11 11M12 1L1 12" stroke="#c9ccd0" stroke-width="2.200"/></svg>
      <svg width="18" height="20" viewBox="0 0 18 20"><path d="M1 18L11 6c-1-3 2-6 6-5l-3 3 1 3 3-1c0 4-3 5-6 4L3 20z" fill="#a9adb3"/></svg>
    </div>
    <div class="cmdmain">
      <pre class="cmdhist">Command: SPHERE
Specify center point or [3P/2P/Ttr]:
Resuming SPHERE command.
Specify center point or [3P/2P/Ttr]:
Specify radius or [Diameter] &lt;1.000&gt;: 1</pre>
      <div class="cmdinput">
        <svg width="20" height="16" viewBox="0 0 20 16"><rect x=".5" y=".5" width="19" height="15" fill="#8f9296" stroke="#555"/><path d="M1 4h18" stroke="#555"/><path d="M3 7l3 2-3 2M7 12h4" fill="none" stroke="#222"/></svg>
        <i class="caret cmdcaret"></i><span class="ph">Type a command</span><i class="caret up cmdup"></i>
      </div>
    </div>
  </section>
  <svg class="canvas top" width="1920" height="761" viewBox="0 220 1920 761"><path class="axis" d="M1280 846L1549 980"/></svg>
</main>

<div class="layoutbar">
  <span class="ltab on">Model</span><span class="ltab">Layout1</span><span class="ltab">Layout2</span><span class="ltab add">+</span>
</div>

<footer class="status">
  <span class="seg model">MODEL</span>
  <div class="seg ml3">
    <span class="sb w29 on"><svg width="22" height="22" viewBox="0 0 22 22"><path d="M6 1v20M12 1v20M18 1v20M1 6h20M1 12h20M1 18h20" stroke="#fff" stroke-width="1.300"/></svg></span>
    <span class="sb w30"><svg width="16" height="16" viewBox="0 0 16 16"><path d="M0 0h3v3H0zM6 0h3v3H6zM12 0h3v3h-3zM0 6h3v3H0zM6 6h3v3H6zM12 6h3v3h-3zM0 12h3v3H0zM6 12h3v3H6zM12 12h3v3h-3z" fill="#dcdcdc"/></svg></span>
    <span class="sb w21"><i class="caret lg"></i></span>
  </div>
  <div class="seg ml3"><span class="sb w30"><svg width="22" height="20" viewBox="0 0 22 20"><path d="M5 1v8M1 5h8" stroke="#dcdcdc" stroke-width="1.500"/><rect x="8" y="10" width="13" height="6" fill="#dcdcdc"/></svg></span></div>
  <div class="seg ml1">
    <span class="sb w26"><svg width="22" height="24" viewBox="0 0 22 24"><path d="M2 1v20h20" fill="none" stroke="#cfd3d8" stroke-width="1.200"/><path d="M2 15h6v6" fill="none" stroke="#cfd3d8"/></svg></span>
    <span class="sb w36"><svg width="22" height="20" viewBox="0 0 22 20"><circle cx="10" cy="11" r="8.500" fill="none" stroke="#a9adb3" stroke-width="1.200"/><path d="M2 17h8L18 3" fill="none" stroke="#a9adb3"/><path d="M10 11h12" stroke="#a9adb3"/></svg></span>
    <span class="sb w16"><i class="caret lg"></i></span>
    <span class="sb w33"><svg width="18" height="22" viewBox="0 0 18 22"><path d="M9 0v22" stroke="#5fbf6a"/><path d="M1 2l16 18" stroke="#c85050"/><rect x="7" y="9" width="4" height="4" fill="none" stroke="#ddd"/></svg></span>
    <span class="sb w19"><i class="caret lg"></i></span>
  </div>
  <div class="seg ml1">
    <span class="sb w31"><svg width="22" height="20" viewBox="0 0 22 20"><path d="M1 15L18 1" stroke="#cfd3d8" stroke-width="1.200"/><path d="M1 18h20" stroke="#8e949b" stroke-width="2"/><rect x="8" y="7" width="4" height="4" fill="#cfd3d8"/></svg></span>
    <span class="sb w28 on"><svg width="26" height="24" viewBox="0 0 26 24"><path d="M5 3h20v20H5z" fill="none" stroke="#fff" stroke-width="1.400"/><rect x="1" y="0" width="7" height="6" fill="#5b8fc7" stroke="#fff"/></svg></span>
    <span class="sb w21"><i class="caret lg"></i></span>
  </div>
  <div class="seg ml4">
    <span class="sb w28 on"><svg width="24" height="24" viewBox="0 0 24 24"><path d="M9 0l3 14 6 8-9-4-8 4 5-8z" fill="#fff"/><circle cx="18" cy="7" r="3" fill="none" stroke="#fff"/></svg></span>
    <span class="sb w30"><svg width="22" height="24" viewBox="0 0 22 24"><path d="M10 0l3 14 6 8-9-4-9 4 6-8z" fill="#cfd3d8"/><path d="M17 2l-3 5h3l-2 4" fill="none" stroke="#cfd3d8"/></svg></span>
    <span class="sb w31"><svg width="20" height="24" viewBox="0 0 20 24"><path d="M10 0l3 14 6 8-9-4-9 4 6-8z" fill="#cfd3d8"/></svg></span>
    <span class="sb w24 scale">1:1</span>
    <span class="sb w18"><i class="caret lg"></i></span>
  </div>
  <div class="seg ml3">
    <span class="sb w30"><svg width="20" height="20" viewBox="0 0 20 20"><path d="M8 0h4l.7 3 2.300 1 2.500-1.500 2.500 2.500L18 7.500l1 2.500 1 .5v3l-3 .7-1 2.300 1.500 2.500-2.500 1-2.500-1.500-1.800.7L12 20H8l-.7-3-2.300-1-2.500 1.500L0 15l1.500-2.500L.5 10 0 9.500v-3l3-.7 1-2.300L2.500 1 5 0l2.500 1.500z" fill="#d6d6d6"/><circle cx="10" cy="10" r="3.500" fill="#3b4453"/></svg></span>
    <span class="sb w20"><i class="caret lg"></i></span>
  </div>
  <div class="seg ml1"><span class="sb w30"><svg width="20" height="20" viewBox="0 0 20 20"><path d="M10 0v20M0 10h20" stroke="#e8e8e8" stroke-width="2.200"/></svg></span></div>
  <div class="seg ml3"><span class="sb w31"><svg width="22" height="24" viewBox="0 0 22 24"><rect x="1" y="1" width="9" height="9" fill="none" stroke="#d6d6d6" stroke-width="1.200"/><circle cx="17" cy="11" r="4" fill="none" stroke="#d6d6d6" stroke-width="1.200"/><path d="M9 14l5 9H4z" fill="none" stroke="#d6d6d6" stroke-width="1.200"/></svg></span></div>
  <div class="seg w4 ml2"></div>
  <div class="seg ml4 last">
    <span class="sb w30"><svg width="22" height="18" viewBox="0 0 22 18"><rect x="1" y="1" width="20" height="16" fill="#6d737c" stroke="#a9adb3"/><path d="M12 7l6-4M18 3h-4M18 3v4" stroke="#fff" fill="none"/><path d="M10 11l-6 4M4 15h4M4 15v-4" stroke="#fff" fill="none"/></svg></span>
    <span class="sb w31"><svg width="20" height="18" viewBox="0 0 20 18"><path d="M0 2h20M0 9h20M0 16h20" stroke="#e0e0e0" stroke-width="2.400"/></svg></span>
  </div>
</footer>

<div class="taskbar">
  <span class="tk w44"><svg width="20" height="20" viewBox="0 0 20 20"><path d="M0 1h9v8.500H0zM10.500 1H20v8.500h-9.500zM0 11h9v8H0zM10.500 11H20v8h-9.500z" fill="#000"/></svg></span>
  <span class="tk w46"><svg width="20" height="22" viewBox="0 0 20 22"><circle cx="12" cy="8" r="7" fill="none" stroke="#111" stroke-width="1.600"/><path d="M7 13l-6 8" stroke="#111" stroke-width="1.600"/></svg></span>
  <span class="tk w44"><svg width="20" height="20" viewBox="0 0 20 20"><ellipse cx="10" cy="10" rx="8" ry="8" fill="none" stroke="#111" stroke-width="3"/></svg></span>
  <span class="tk w49"><svg width="22" height="20" viewBox="0 0 22 20"><path d="M1 1h14M1 19h14M3 6h10v8H3z" fill="none" stroke="#111" stroke-width="1.500"/><path d="M19 1v4M19 8v4M19 15v4" stroke="#111" stroke-width="2"/></svg></span>
  <span class="tk open"><svg width="22" height="22" viewBox="0 0 22 22"><circle cx="11" cy="11" r="10.500" fill="#1476c8"/><path d="M3 6c4-6 14-6 17 2 1 4-1 7-4 7-3 0-4-2-3-4-3-2-7-1-8 2-2-2-3-4-2-7z" fill="#36c2b4"/><path d="M13 4c3 0 6 2 7 5 0 3-1 5-4 6 1-3-1-7-3-11z" fill="#6fd868"/></svg></span>
  <span class="tk"><svg width="20" height="20" viewBox="0 0 20 20"><path d="M0 2h8l2 2h10v16H0z" fill="#f2c44f"/><path d="M0 2h8l2 2H0z" fill="#d49a22"/><path d="M6 12h8v8h-2v-5H8v5H6z" fill="#3c8dd0"/></svg></span>
  <span class="tk"><svg width="20" height="22" viewBox="0 0 20 22"><rect y="3" width="20" height="19" rx="2" fill="#0a3a70"/><path d="M6 3a4 3 0 0 1 8 0" fill="none" stroke="#3c8dd0" stroke-width="1.500"/><path d="M5 8h4.500v4.500H5z" fill="#f25022"/><path d="M10.500 8H15v4.500h-4.500z" fill="#7fba00"/><path d="M5 13.500h4.500V18H5z" fill="#00a4ef"/><path d="M10.500 13.500H15V18h-4.500z" fill="#ffb900"/></svg></span>
  <span class="tk"><svg width="20" height="20" viewBox="0 0 20 20"><path d="M0 8L10 0l10 8v12H0z" fill="#1e9ae0"/><path d="M3 8L10 3l7 5-7 6z" fill="#fff"/><path d="M0 8l10 7 10-7" fill="none" stroke="#0b6db0"/></svg></span>
  <span class="tk"><svg width="20" height="20" viewBox="0 0 20 20"><path d="M5 1l5 3.500L5 8 0 4.500zM15 1l5 3.500L15 8l-5-3.500zM5 8l5 3.500L5 15l-5-3.500zM15 8l5 3.500L15 15l-5-3.500zM10 13l5 3.500L10 20l-5-3.500z" fill="#000"/></svg></span>
  <span class="tk"><svg width="20" height="20" viewBox="0 0 20 20"><rect width="20" height="20" fill="#c8702f"/><circle cx="10" cy="10" r="7" fill="#f0d8c0"/><path d="M7 16V9a3 3 0 0 1 6 0v7z" fill="#c8702f"/></svg></span>
  <span class="tk"><svg width="20" height="20" viewBox="0 0 20 20"><path d="M6 0h14v20H6z" fill="#21a366"/><path d="M13 0h7v10h-7z" fill="#33c481"/><path d="M13 10h7v10h-7z" fill="#107c41"/><rect y="4" width="11" height="12" fill="#0e6e3a"/><text class="tkx" x="2.500" y="14">X</text></svg></span>
  <span class="tk"><svg width="20" height="20" viewBox="0 0 20 20"><path d="M6 0h14v20H6z" fill="#2b7cd3"/><path d="M6 0h14v6H6z" fill="#41a5ee"/><path d="M6 13h14v7H6z" fill="#185abd"/><rect y="4" width="12" height="12" fill="#103f91"/><text class="tkx" x="1" y="14">W</text></svg></span>
  <span class="tk"><svg width="20" height="20" viewBox="0 0 20 20"><circle cx="11" cy="10" r="9.500" fill="#ed6c47"/><path d="M11 .5a9.500 9.500 0 0 1 9.500 9.500H11z" fill="#ff8f6b"/><rect y="4" width="11" height="12" fill="#c43e1c"/><text class="tkx" x="2.500" y="14">P</text></svg></span>
  <span class="tk"><svg width="20" height="20" viewBox="0 0 20 20"><rect width="20" height="20" rx="5" fill="#5aa0f5"/><rect x="4" y="6" width="8" height="8" rx="1.500" fill="#fff"/><path d="M13 9l4-3v8l-4-3z" fill="#fff"/></svg></span>
  <span class="tk"><svg width="20" height="20" viewBox="0 0 20 20"><rect width="20" height="20" fill="#a30c0c"/><text class="tkfz" x="3" y="16">Fz</text></svg></span>
  <span class="tk open active"><span class="tkA">A</span></span>
  <span class="tk"><span class="tkR">R</span></span>
  <span class="tk open"><svg width="20" height="20" viewBox="0 0 20 20"><circle cx="10" cy="10" r="10" fill="#777"/><circle cx="10" cy="10" r="6.500" fill="none" stroke="#222" stroke-width="1.600"/><circle cx="11" cy="11" r="3" fill="none" stroke="#eee"/></svg></span>
  <span class="tk open"><svg width="20" height="20" viewBox="0 0 20 20"><rect x="8" y="3" width="12" height="14" fill="#fff" stroke="#1a73c8"/><path d="M11 9l2 3 4-5" fill="none" stroke="#1a73c8" stroke-width="1.500"/><rect y="1" width="11" height="18" fill="#0a6cc4"/><text class="tkx" x="2" y="14">O</text></svg></span>
  <span class="tk open"><svg width="18" height="20" viewBox="0 0 18 20"><rect width="18" height="20" rx="1" fill="#2a2a2a"/><path d="M18 8v12H8z" fill="#f5d20a"/></svg></span>
  <div class="tray">
    <svg class="trayhelp" width="28" height="28" viewBox="0 0 28 28"><circle cx="12" cy="12" r="12" fill="#fff"/><circle cx="12" cy="12" r="10" fill="#1a8fd8"/><text class="tkq" x="6.500" y="18">?</text><circle cx="21" cy="21" r="6.500" fill="#f5a623"/><path d="M21 18v6" stroke="#fff" stroke-width="2"/></svg>
    <svg class="traysun" width="24" height="24" viewBox="0 0 24 24"><defs><linearGradient id="sun" x1="0" y1="0" x2="0" y2="1"><stop offset="0" stop-color="#fbe07a"/><stop offset="1" stop-color="#fba614"/></linearGradient></defs><circle cx="12" cy="12" r="12" fill="url(#sun)"/></svg>
    <span class="temp">12°C</span><span class="sol">Sol</span>
    <span class="ts"><svg width="18" height="12" viewBox="0 0 18 12"><path d="M1 10l8-8 8 8" fill="none" stroke="#111" stroke-width="1.400"/></svg></span>
    <span class="ts"><svg width="14" height="22" viewBox="0 0 14 22"><path d="M2 3q4-2 8 0M2 19q4 2 8 0" fill="none" stroke="#111"/><rect x="1" y="6" width="8" height="10" rx="1" fill="none" stroke="#111"/><path d="M10 9l3-2v8l-3-2z" fill="none" stroke="#111"/></svg></span>
    <span class="ts"><svg width="20" height="14" viewBox="0 0 20 14"><path d="M4 13a3 3 0 0 1 0-7 6 6 0 0 1 11-1 4 4 0 0 1 1 8z" fill="#8b8b8b" stroke="#111"/><path d="M1 9h18" stroke="#111" stroke-width=".6"/></svg></span>
    <span class="ts"><svg width="20" height="20" viewBox="0 0 20 20"><path d="M1 3L18 0v16L1 18z" fill="#e6e6e6" stroke="#111"/><path d="M6 9a4 4 0 0 1 7-2M13 9a4 4 0 0 1-7 2" fill="none" stroke="#111"/><circle cx="15" cy="16" r="4" fill="#2a70c8"/></svg></span>
    <span class="ts"><svg width="20" height="16" viewBox="0 0 20 16"><rect x="6" y="4" width="13" height="9" fill="#111"/><path d="M3 1v6M0 4h5" stroke="#111"/><path d="M19 7h1v3h-1z" fill="#111"/></svg></span>
    <span class="ts"><svg width="18" height="18" viewBox="0 0 18 18"><path d="M1 10q4-7 13-8M3 13q3-5 10-6M6 15q2-3 6-4" fill="none" stroke="#222"/><circle cx="13" cy="16" r="1.500" fill="#111"/></svg></span>
    <span class="ts"><svg width="20" height="18" viewBox="0 0 20 18"><path d="M1 6h4l5-4v14l-5-4H1z" fill="none" stroke="#222"/><path d="M13 6q2 3 0 6M16 3q4 6 0 12" fill="none" stroke="#999"/></svg></span>
    <span class="clock">09:22</span>
    <svg class="notif" width="20" height="23" viewBox="0 0 20 23"><path d="M0 0h20v19h-7l-3 3-3-3H0z" fill="#000"/><path d="M4 5h12M4 9h12M4 13h8" stroke="#fff"/></svg>
  </div>
</div>

</div>
</body>
</html>
```
FILE: styles.css
```css
*{box-sizing:border-box}
html,body{margin:0;padding:0}
body{width:1920px;height:1080px;overflow:hidden;background:#212830;color:#e6eaef;font-family:"Open Sans","Noto Sans",sans-serif;font-size:14px}
.app{display:flex;flex-direction:column;height:1080px}
svg{display:block;flex:none}

.ml1{margin-left:1px}.ml2{margin-left:2px}.ml3{margin-left:3px}.ml4{margin-left:4px}.ml5{margin-left:5px}.ml6{margin-left:6px}.ml7{margin-left:7px}.ml8{margin-left:8px}.ml9{margin-left:9px}.ml10{margin-left:10px}.ml11{margin-left:11px}.ml12{margin-left:12px}.ml13{margin-left:13px}.ml14{margin-left:14px}.ml15{margin-left:15px}.ml16{margin-left:16px}

.caret{display:inline-block;flex:none;width:0;height:0;border-left:4px solid transparent;border-right:4px solid transparent;border-top:5px solid #cdd1d6}
.caret.dim{border-top-color:#6b7380}
.caret.tiny{border-left-width:3.500px;border-right-width:3.500px;border-top-width:4px}
.caret.sm{border-left-width:3.500px;border-right-width:3.500px;border-top-width:4px;margin-top:4px}
.caret.lg{border-left-width:6px;border-right-width:6px;border-top-width:6px;border-top-color:#dfe2e6}
.caret.up{border-top:none;border-bottom:5px solid #444}
.caret.right{margin-left:auto}

/* title bar */
.titlebar{height:34px;display:grid;grid-template-columns:686px 515px 1fr;padding-bottom:7px;align-items:center}
.qat{display:flex;align-items:center;padding-left:6px}
.logo{width:16px;font-weight:700;font-size:23px;line-height:24px;color:#b02a2e}
.share{margin-left:6px;color:#79bdea}
.doctitle{display:flex;color:#f0f2f4}
.docname{margin-left:16px}
.infocenter{display:flex;align-items:center;height:27px}
.search{width:223px;height:27px;background:#414b5c;color:#a3aab5;font-style:italic;font-size:13px;line-height:27px;padding-left:4px}
.user{color:#eef0f3;width:103px;white-space:nowrap}
.vsep{width:1px;height:24px;background:#444d5b}
.help{width:20px;height:20px;border-radius:50%;background:#c4c4c4;color:#444;text-align:center;font-weight:700;line-height:20px;font-size:14px}
.winbtns{margin-left:auto;display:flex;gap:19px;padding-right:6px;align-items:center}

/* ribbon tabs */
.ribbontabs{height:25px;display:grid;grid-template-columns:63px 60px 86px 94px 56px 78px 70px 76px 102px 112px 148px 19px 20px;padding-left:3px;align-items:center}
.rt{height:25px;line-height:25px;padding-left:14px;color:#b4bcc8;white-space:nowrap}
.rt.active{background:#3b4453;color:#f2f4f6;padding-left:12px}
.minbtn{width:19px;height:9px;background:#dcdcdc;display:flex;align-items:center;justify-content:center}

/* ribbon */
.ribbon{height:124px;background:#3b4453;display:flex}
.panel{display:flex;flex-direction:column;border-right:1px solid #29303b;position:relative}
.pbody{height:103px;display:grid;align-items:start;padding-top:6px}
.ptitle{height:19px;display:flex;align-items:center;justify-content:center;gap:7px;color:#dfe4ea;line-height:19px;padding-right:3px}
.launch{position:absolute;right:5px;bottom:8px}
.viewtitle{padding-right:32px}
.propstitle{padding-right:20px}
.big{display:flex;flex-direction:column;align-items:center;color:#e4e9ef}
.lbl{line-height:20px;white-space:nowrap}
.rows{display:grid;grid-template-rows:repeat(3,31px);align-items:center;color:#e4e9ef;margin-top:-1px}
.row{display:flex;align-items:center;white-space:nowrap}
.row.t>span{margin-left:6px}
.bigA{height:46px;font-family:"Liberation Sans",sans-serif;font-size:52px;line-height:46px;color:#d8d8d8}

.p-draw{width:278px}.p-draw .pbody{grid-template-columns:52px 56px 66px 48px 55px}
.drawsmall{padding-left:6px}
.p-modify{width:316px}.p-modify .pbody{grid-template-columns:91px 89px 94px 34px;padding-left:7px}
.p-annot{width:211px}.p-annot .pbody{grid-template-columns:58px 72px 80px}
.annsmall{padding-left:9px}
.p-layers{width:341px}.p-layers .pbody{grid-template-columns:76px 262px}
.layerscol{display:flex;flex-direction:column}
.dd{display:flex;align-items:center;height:28px;background:#4a5568;border:1px solid #272d38;padding:0 4px;color:#e6eaef}
.layerdd{height:27px;padding:0 0 0 6px;margin-left:1px;margin-right:3px;margin-bottom:3px}
.swatch{width:18px;height:18px;background:#fff;border:2px solid #111}
.ddtext{line-height:20px}
.layerrow{height:31px;padding-left:3px}
.layerrow svg:nth-child(2){margin-left:9px}
.layerrow svg:nth-child(3){margin-left:6px}
.layerrow svg:nth-child(4){margin-left:11px}
.layerrow svg:nth-child(5){margin-left:5px}
.layerrow.t>span{margin-left:7px}
.p-block{width:100px}.p-block .pbody{grid-template-columns:52px 47px}
.blocksmall{padding-left:3px}
.p-props{width:277px}.p-props .pbody{grid-template-columns:76px 26px 171px}
.propicons{justify-items:center;padding-right:5px;grid-template-rows:repeat(3,30px)}
.propdds{display:flex;flex-direction:column;gap:2px;padding-top:1px}
.swatch2{width:20px;height:20px;background:#fff;border:1px solid #a9adb3;margin-left:11px}
.ddline{width:80px;height:1px;background:#f0f0f0;margin-left:1px;margin-right:2px}
.p-groups{width:85px}.p-groups .pbody{grid-template-columns:50px 34px}
.groupsmall{padding-left:6px;justify-items:start}
.selbox{width:28px;height:27px;margin-left:-5px;background:#3f5062;border:1px solid #6bb3e8;justify-content:center}
.p-util{width:122px}.p-util .pbody{grid-template-columns:88px 34px}
.utilsmall{padding-left:1px}
.p-clip{width:98px}.p-clip .pbody{grid-template-columns:64px 33px}
.clipsmall{padding-left:3px}
.p-view{width:92px;border-right:none}.p-view .pbody{grid-template-columns:76px}

/* file tabs */
.ribbon+.filetabs{margin-top:0}
.filetabs{height:32px;padding:4px 0 0 27px;display:flex}
.ftab{height:28px;display:flex;align-items:center;border-radius:10px 12px 0 0;background:#2d3440;color:#b4bcc8;white-space:nowrap;padding-top:1px}
.ftab.start{width:153px;padding-left:12px}
.ftab.current{width:155px;margin-left:2px;background:#3b4453;color:#eef0f3;padding-left:11px;justify-content:space-between;padding-right:18px}
.ftab.plus{width:25px;height:24px;margin-left:7px;justify-content:center;font-size:20px;font-weight:700;color:#aeb4bc}
.strip{height:5px;background:#39424f}

/* viewport */
.viewport{height:761px;position:relative;overflow:hidden;background:#212830}
.canvas{position:absolute;left:0;top:0}
.canvas.top{pointer-events:none}
.grid path{fill:none;stroke:#2a313d;stroke-width:1}
.axis{fill:none;stroke:#f4f4f4;stroke-width:1.200}
.red{fill:none;stroke:#6e2d35;stroke-width:1}
.redin{fill:none;stroke:#7b3338;stroke-width:1}
.edge{fill:none;stroke:#f6f6f6;stroke-width:1.300}
.edge.thin{stroke:#d6d8d8;stroke-width:1}
.greyline{stroke:#9fa2a3;stroke-width:1}
.green{fill:none;stroke:#4d8a55;stroke-width:.8;opacity:.7}
.vplabel{position:absolute;left:3px;top:5px;color:#e4e8ec;font-size:14.600px;line-height:20px}
.vpbtns{position:absolute;right:10px;top:10px;display:flex;gap:13px}
.viewcube{position:absolute;left:1750px;top:60px}
.cubetxt{font-family:"Liberation Sans",sans-serif;font-size:9px;font-weight:700;fill:#55595e}
.cubetxt.big{font-size:11px}
.compass{font-family:"Liberation Sans",sans-serif;font-size:20px;font-weight:700;fill:#a2a7ad}
.wcs{position:absolute;left:1802px;top:212px;width:56px;height:20px;background:#8a8f9e;border:1px solid #a2a6b2;border-radius:4px;color:#4e535c;font-family:"Liberation Sans",sans-serif;font-size:12px;line-height:18px;padding-left:4px;display:flex;align-items:center}
.caret.hollow{margin-left:7px;border-top-color:#b9bcc5}
.navbar{position:absolute;left:1877px;top:262px;width:40px;height:259px;background:#5a6168;border-radius:3px}
.cmd{position:absolute;left:389px;top:629px;width:1141px;height:131px;display:flex}
.cmdhandle{width:31px;background:#2a303d;display:flex;flex-direction:column;align-items:center;padding-top:7px;padding-right:2px}
.cmdhandle svg:nth-child(2){margin-top:8px}
.cmdhandle svg:nth-child(3){margin-top:11px}
.cmdmain{flex:1;display:flex;flex-direction:column;padding-top:1px}
.cmdhist{margin:0;height:104px;padding:8px 0 0 3px;background:rgba(187,188,189,.76);color:#1a1a1a;font-family:"DejaVu Sans Mono","Liberation Mono",monospace;font-size:14.900px;line-height:19px}
.cmdinput{margin-top:1px;height:24px;background:rgba(218,219,221,.82);display:flex;align-items:center;padding-left:5px;border-radius:0 0 2px 2px}
.cmdcaret{margin-left:3px;border-top-color:#444}
.ph{margin-left:10px;font-family:"DejaVu Sans Mono","Liberation Mono",monospace;font-size:14.900px;font-style:italic;color:#5e6268}
.cmdup{margin-left:auto;margin-right:6px}

/* layout tabs */
.layoutbar{height:27px;border-top:1px solid #3b4453;display:flex;padding:0 0 0 14px;align-items:flex-start}
.ltab{height:22px;display:flex;align-items:center;justify-content:center;border-radius:4px 8px 6px 8px;background:#2b323e;color:#b9c0ca;width:78px;margin-right:3px}
.ltab.on{background:#3b4453;color:#f4f5f7;font-weight:700;width:72px}
.ltab.add{width:28px;margin-left:4px;font-size:18px;font-weight:700}

/* status */
.status{height:32px;display:flex;justify-content:flex-end;align-items:flex-start}
.seg{height:30px;display:flex;background:#3b4453}
.seg.model{width:59px;align-items:center;justify-content:center;color:#f1f3f5}
.seg.w4{width:4px}
.sb{height:30px;display:flex;align-items:center;justify-content:center;flex:none}
.sb.on{background:#5b8fc7}
.scale{color:#e8ebee}
.w16{width:16px}.w18{width:18px}.w19{width:19px}.w20{width:20px}.w21{width:21px}.w24{width:24px}.w26{width:26px}.w28{width:28px}.w29{width:29px}.w30{width:30px}.w31{width:31px}.w33{width:33px}.w36{width:36px}

/* taskbar */
.taskbar{height:40px;display:flex;background:linear-gradient(90deg,#dfe7ee 0%,#e4e7ea 30%,#e9e3dc 55%,#ecdfd4 75%,#ebe2d8 92%,#e8ebe4 100%);position:relative;color:#111}
.tk{width:46px;height:40px;display:flex;align-items:center;justify-content:center;position:relative;flex:none}
.tk.w44{width:44px}.tk.w46{width:46px}.tk.w49{width:49px}
.tk.open::after{content:"";position:absolute;left:6px;right:6px;bottom:0;height:3px;background:#c8702f}
.tk.active{background:#f3f1ef}
.tk.active::after{left:0;right:0}
.tkA{font-weight:700;font-size:22px;color:#b52a2e;background:#f6d8d4;width:20px;height:20px;display:flex;align-items:center;justify-content:center}
.tkR{font-weight:700;font-size:20px;color:#2c6cb0;background:#cfe2f4;width:20px;height:20px;display:flex;align-items:center;justify-content:center}
.tkx{font-size:10px;font-weight:700;fill:#fff}
.tkfz{font-size:14px;font-weight:700;font-style:italic;fill:#fff}
.tkq{font-size:18px;font-weight:700;fill:#fff}
.tray{margin-left:453px;display:flex;align-items:center;height:40px}
.traysun{margin-left:77px}
.temp{margin-left:14px;font-size:17px}
.sol{margin-left:11px;font-size:17px}
.ts{width:30px;display:flex;justify-content:center;flex:none}
.temp+.sol+.ts{margin-left:6px}
.clock{margin-left:8px;width:36px;font-size:14px;white-space:nowrap}
.notif{margin-left:22px}
```
